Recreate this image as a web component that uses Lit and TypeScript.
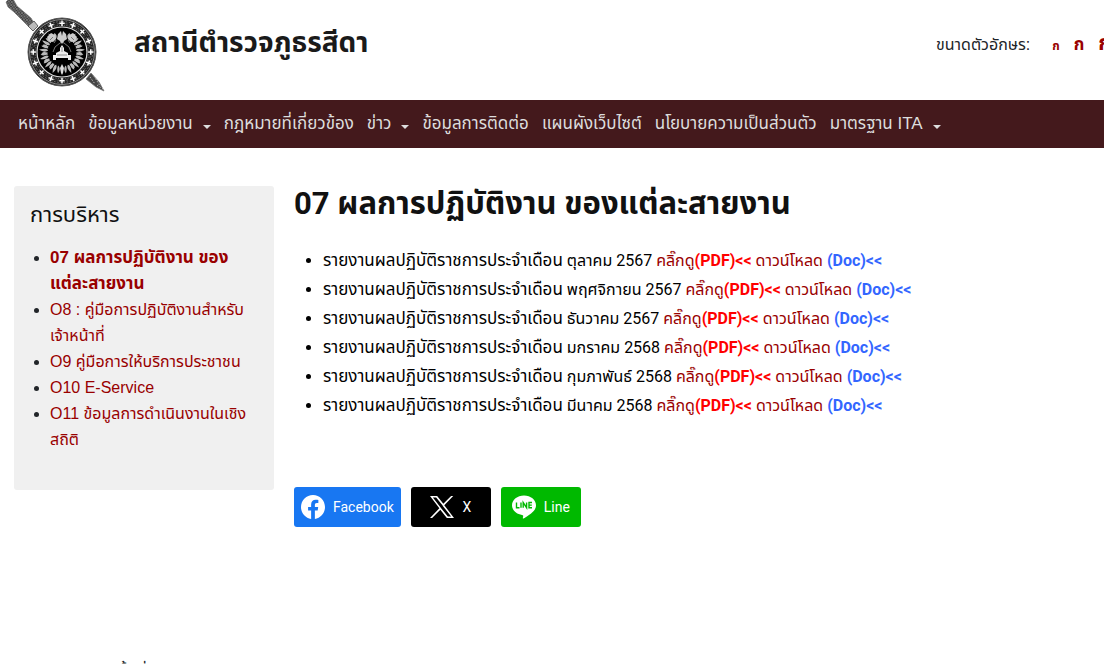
import { LitElement, html, svg, css } from "lit";
import { customElement } from "lit/decorators.js";

const NAV = [
  { label: "หน้าหลัก" },
  { label: "ข้อมูลหน่วยงาน", menu: true },
  { label: "กฎหมายที่เกี่ยวข้อง" },
  { label: "ข่าว", menu: true },
  { label: "ข้อมูลการติดต่อ" },
  { label: "แผนผังเว็บไซต์" },
  { label: "นโยบายความเป็นส่วนตัว" },
  { label: "มาตรฐาน ITA", menu: true },
];

const SIDE = [
  "07 ผลการปฏิบัติงาน ของแต่ละสายงาน",
  "O8 : คู่มือการปฏิบัติงานสำหรับเจ้าหน้าที่",
  "O9 คู่มือการให้บริการประชาชน",
  "O10 E-Service",
  "O11 ข้อมูลการดำเนินงานในเชิงสถิติ",
];

const MONTHS = [
  "ตุลาคม 2567",
  "พฤศจิกายน 2567",
  "ธันวาคม 2567",
  "มกราคม 2568",
  "กุมภาพันธ์ 2568",
  "มีนาคม 2568",
];

@customElement("police-emblem")
export class PoliceEmblem extends LitElement {
  static styles = css`
    :host { display: block; }
    svg { display: block; }
  `;

  render() {
    const ring = Array.from({ length: 16 }, (_, i) => i * 22.5);
    const leaves = [36, 60, 84, 108, 132, 156];
    return html`<svg width="106" height="94" viewBox="0 0 106 94" role="img" aria-label="ตราโล่เขน">
      <defs>
        <pattern id="grip" width="3" height="3" patternUnits="userSpaceOnUse" patternTransform="rotate(10)">
          <rect width="3" height="3" fill="#3a3a3a"/>
          <path d="M0 0L3 3M3 0L0 3" stroke="#999" stroke-width=".6"/>
        </pattern>
      </defs>
      <path d="M6 2L9-1H13L17 6L31 18L34 23L29 27L14 12L8 7Z" fill="url(#grip)" stroke="#666" stroke-width=".6"/>
      <path d="M28 26l6-5 4 5-5 5z" fill="#bbb" stroke="#444" stroke-width=".8"/>
      <path d="M86 79L91 73L99 82L104 91L96 87Z" fill="#454545" stroke="#777" stroke-width=".8"/>
      <path d="M90 77l5 7M94 76l6 10M97 85l6 4" stroke="#bbb" stroke-width="1" stroke-dasharray="1.5 1.5"/>
      <circle cx="62" cy="52" r="34" fill="#222" stroke="#555" stroke-width="1"/>
      <circle cx="62" cy="52" r="32.5" fill="none" stroke="#bbb" stroke-width=".7"/>
      <circle cx="62" cy="52" r="30.500" fill="none" stroke="#777" stroke-width="1" stroke-dasharray="1.500 1.700"/>
      <circle cx="62" cy="52" r="28.500" fill="none" stroke="#666" stroke-width="1" stroke-dasharray="2 2.300"/>
      <circle cx="62" cy="52" r="26.800" fill="none" stroke="#777" stroke-width="1" stroke-dasharray="1 1.500"/>
      <circle cx="62" cy="52" r="25" fill="#000" stroke="#ddd" stroke-width="1.200"/>
      ${ring.map((a) => svg`<path transform="rotate(${a} 62 52)" d="M62 20.500v5.400M59.300 23.200h5.400" stroke="#fff" stroke-width="1.500"/>`)}
      ${[1, -1].map((s) => svg`<g transform="translate(62 52) scale(${s} 1)">
        ${leaves.map((a) => svg`<g transform="rotate(${a}) translate(0 -18)">
          <path d="M0 4C-2 3-2 0 0-5C2-1 2 2 0 4ZM-2 4C-6 3-6 0-5-2C-3 0-2 1-2 4ZM2 4C5 3 6 0 5-3C3-1 2 1 2 4Z" fill="#bbb"/>
        </g>`)}
        <path d="M1-21l3 3 1 5-3 2-1 3-2-3zM7-17l4-2 4 4-2 4-4 1-3-3z" fill="#ccc"/>
        <path d="M2-9l5 4 2 5M6-12l2 3M9-15l3 3" stroke="#777" stroke-width="1" fill="none"/>
      </g>`)}
      <path d="M62 45l2 3v3l4 2v2h3v5h-3v-2H56v2h-3v-5h3v-2l4-2v-3z" fill="#eee"/>
      <path d="M57 55h10M62 47v5" stroke="#777" stroke-width=".8"/>
      <path d="M62 64l2 4-1 5-1 2-1-2-1-5z" fill="#ddd"/>
    </svg>`;
  }
}

@customElement("app-root")
export class AppRoot extends LitElement {
  static styles = css`
    :host {
      display: block;
      height: 100vh;
      overflow: hidden;
      background: #fff;
      color: #212529;
      font-family: "Liberation Sans", "Noto Sans Thai", Tahoma, sans-serif;
      font-size: 16px;
      line-height: 26px;
    }
    * { box-sizing: border-box; }
    a { color: #900; text-decoration: none; }
    ul, h1, h2, p { margin: 0; padding: 0; }
    .top {
      display: flex;
      align-items: center;
      height: 100px;
      overflow: hidden;
      white-space: nowrap;
    }
    .brand { display: flex; align-items: center; gap: 28px; height: 100%; flex: 1; }
    .brand police-emblem { align-self: flex-start; }
    .site { font-size: 28px; line-height: 32px; font-weight: 700; color: #1a1a1a; padding-bottom: 14px; }
    .sizes { display: flex; align-items: baseline; padding-bottom: 14px; width: 168px; }
    .sizes button {
      border: 0; background: none; padding: 0; color: #900;
      font-family: inherit; font-weight: 700; flex: none;
    }
    .small { font-size: 12px; margin-left: 22px; }
    .medium { font-size: 17px; margin-left: 14px; }
    .large { font-size: 22px; margin-left: 14px; }
    .nav { background: #44191c; padding: 0 18px; height: 48px; font-size: 17px; }
    .menu { display: flex; list-style: none; gap: 13px; white-space: nowrap; }
    .menu a { display: flex; align-items: center; gap: 10px; height: 48px; color: #ddd; }
    .caret { border: 4px solid transparent; border-top-color: #ddd; border-bottom: 0; margin-top: 6px; }
    .body {
      display: grid;
      grid-template-columns: 260px minmax(0, 1fr);
      gap: 20px;
      padding: 38px 14px 0;
      min-height: 514px;
      align-items: start;
    }
    .side { background: #f0f0f0; border-radius: 3px; padding: 15px 16px 37px; }
    .side h2 { font-size: 22px; line-height: 28px; font-weight: 400; color: #111; margin-bottom: 16px; }
    .side ul { padding-left: 20px; }
    .side .current { font-size: 17px; font-weight: 700; }
    .main { font-family: Roboto, "Noto Sans Thai", Tahoma, sans-serif; }
    .main h1 { font-size: 31px; line-height: 36px; font-weight: 700; color: #111; margin-bottom: 24px; }
    .reports { padding-left: 29px; color: #000; line-height: 29px; }
    .lead { font-size: 17px; }
    .pdf { color: #f00; }
    .doc { color: #36f; }
    .share { display: flex; gap: 10px; margin-top: 67px; }
    .share button {
      display: flex; align-items: center; justify-content: center; gap: 8px;
      height: 40px; min-width: 80px; padding: 0 7px; border: 0; border-radius: 3px;
      color: #fff; font: 14px/20px Roboto, sans-serif;
    }
    .share svg { display: block; width: 24px; height: 24px; }
    .share .facebook { background: #1877f2; }
    .share .x { background: #000; }
    .share .line { background: #00b900; }
    .foot { padding: 0 14px; font-size: 16px; line-height: 20px; }
  `;

  render() {
    return html`
      <header class="top">
        <div class="brand">
          <police-emblem></police-emblem>
          <p class="site">สถานีตำรวจภูธรสีดา</p>
        </div>
        <div class="sizes">
          <span>ขนาดตัวอักษร:</span>
          <button class="small" aria-label="ตัวอักษรเล็ก">ก</button>
          <button class="medium" aria-label="ตัวอักษรปกติ">ก</button>
          <button class="large" aria-label="ตัวอักษรใหญ่">ก</button>
        </div>
      </header>
      <nav class="nav">
        <ul class="menu">
          ${NAV.map((n) => html`<li><a href="#">${n.label}${n.menu ? html`<span class="caret"></span>` : ""}</a></li>`)}
        </ul>
      </nav>
      <div class="body">
        <aside class="side">
          <h2>การบริหาร</h2>
          <ul>
            ${SIDE.map((s, i) => html`<li><a class=${i === 0 ? "current" : ""} href="#">${s}</a></li>`)}
          </ul>
        </aside>
        <main class="main">
          <h1>07 ผลการปฏิบัติงาน ของแต่ละสายงาน</h1>
          <ul class="reports">
            ${MONTHS.map((m) => html`<li><span class="lead">รายงานผลปฏิบัติราชการประจำเดือน</span> ${m} <a href="#">คลิ๊กดู<strong class="pdf">(PDF)&lt;&lt;</strong></a> <a href="#">ดาวน์โหลด <strong class="doc">(Doc)&lt;&lt;</strong></a></li>`)}
          </ul>
          <div class="share">
            <button class="facebook">
              <svg viewBox="0 0 24 24"><path fill="#fff" d="M24 12.070C24 5.400 18.630 0 12 0S0 5.400 0 12.070C0 18.100 4.390 23.090 10.130 24v-8.440H7.080v-3.490h3.050V9.410c0-3.020 1.790-4.690 4.530-4.690 1.310 0 2.690.24 2.690.24v2.970h-1.520c-1.490 0-1.960.93-1.960 1.890v2.250h3.330l-.53 3.490h-2.800V24C19.610 23.090 24 18.100 24 12.070z"/></svg>
              Facebook
            </button>
            <button class="x">
              <svg viewBox="0 0 24 24"><path fill="#fff" d="M14.280 10.160 23.220 1h-2.120l-7.760 7.820L7.150 1H0l9.370 12.340L0 23h2.120l8.190-8.320L16.850 23H24zM11.380 13.460l-.95-1.330L2.880 2.560h3.250l6.100 7.530.95 1.330 7.920 10.090h-3.250z"/></svg>
              X
            </button>
            <button class="line">
              <svg viewBox="0 0 24 24"><path fill="#fff" d="M24 10.300C24 4.930 18.620.57 12 .57S0 4.930 0 10.300c0 4.810 4.270 8.840 10.040 9.610.39.080.92.260 1.060.59.120.3.080.78.040 1.080l-.17 1.030c-.5.300-.24 1.190 1.040.65 1.290-.54 6.910-4.070 9.430-6.970C23.180 14.390 24 12.460 24 10.300z"/><path d="M4.500 7.500v5.200h3M9 7.500v5.200M11.200 12.700V7.500l3.400 5.200V7.500M20 7.500h-3v5.200h3M17 10.100h2.800" fill="none" stroke="#00b900" stroke-width="1.400"/></svg>
              Line
            </button>
          </div>
        </main>
      </div>
      <footer class="foot">เขตการปกครองพื้นที่</footer>
    `;
  }
}
